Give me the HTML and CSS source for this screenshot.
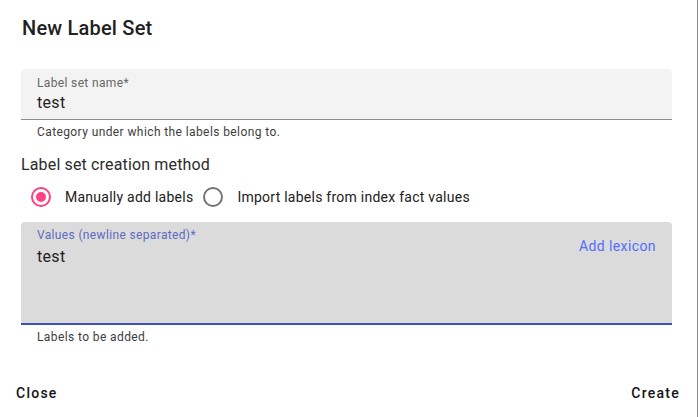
FILE: index.html
```html
<!DOCTYPE html>
<html lang="en">
<head>
<meta charset="utf-8">
<title>New Label Set</title>
<link rel="stylesheet" href="styles.css">
</head>
<body>
<div class="dialog">
  <h2 class="title">New Label Set</h2>
  <div class="content">
    <div class="field field-filled">
      <div class="field-main">
        <div class="field-label">Label set name*</div>
        <div class="field-value">test</div>
      </div>
    </div>
    <div class="hint">Category under which the labels belong to.</div>

    <div class="section-title">Label set creation method</div>
    <div class="radio-group">
      <label class="radio radio-checked">
        <span class="radio-touch"><span class="radio-ring"><span class="radio-dot"></span></span></span>
        <span class="radio-text">Manually add labels</span>
      </label>
      <label class="radio">
        <span class="radio-touch"><span class="radio-ring"></span></span>
        <span class="radio-text">Import labels from index fact values</span>
      </label>
    </div>

    <div class="field field-focused">
      <div class="field-main">
        <div class="field-label">Values (newline separated)*</div>
        <div class="field-value field-value-area">test</div>
      </div>
      <span class="field-suffix">Add lexicon</span>
    </div>
    <div class="hint">Labels to be added.</div>
  </div>
  <div class="actions">
    <button class="btn" type="button">Close</button>
    <button class="btn" type="button">Create</button>
  </div>
</div>
</body>
</html>
```

FILE: styles.css
```css
html, body {
  margin: 0;
  padding: 0;
  background: #ffffff;
}

body {
  font-family: Roboto, "Liberation Sans", Arial, sans-serif;
  color: #212121;
}

.dialog {
  width: 697px;
  height: 417px;
  border-right: 1px solid #8c8c8c;
  display: flex;
  flex-direction: column;
  background: #ffffff;
}

.title {
  margin: 0;
  padding: 12px 0 0 22px;
  font-size: 20px;
  line-height: 32px;
  font-weight: 500;
  letter-spacing: 0.2px;
  color: #212121;
}

.content {
  margin-top: 25px;
  padding: 0 25px 0 21px;
}

.field {
  display: flex;
  align-items: flex-start;
  box-sizing: border-box;
  border-radius: 4px 4px 0 0;
  padding: 0 16px;
}

.field-main {
  flex: 1;
  min-width: 0;
}

.field-filled {
  height: 51px;
  padding-top: 6px;
  background: #f3f3f3;
  border-bottom: 1px solid #8d8d8d;
}

.field-focused {
  height: 103px;
  padding-top: 5px;
  background: #dbdbdb;
  border-bottom: 2px solid #3f51b5;
}

.field-label {
  font-size: 12px;
  line-height: 16px;
  letter-spacing: 0.35px;
  color: #666666;
}

.field-focused .field-label {
  color: #5c6bc0;
}

.field-value {
  margin-top: 2px;
  font-size: 16px;
  line-height: 20px;
  letter-spacing: 0.3px;
  color: #1e1e1e;
}

.field-value-area {
  margin-top: 4px;
}

.field-suffix {
  margin-top: 9px;
  font-size: 14px;
  line-height: 20px;
  letter-spacing: 0.4px;
  color: #536dfe;
}

.hint {
  margin-top: 4px;
  padding-left: 16px;
  font-size: 12px;
  line-height: 16px;
  letter-spacing: 0.4px;
  color: #3d3d3d;
}

.section-title {
  margin-top: 13px;
  font-size: 16px;
  line-height: 24px;
  letter-spacing: 0.15px;
  color: #2b2b2b;
}

.radio-group {
  display: flex;
  align-items: center;
  height: 40px;
  margin-bottom: 5px;
}

.radio {
  display: inline-flex;
  align-items: center;
}

.radio-touch {
  width: 40px;
  height: 40px;
  display: flex;
  align-items: center;
  justify-content: center;
}

.radio-ring {
  width: 20px;
  height: 20px;
  box-sizing: border-box;
  border: 2px solid #737373;
  border-radius: 50%;
  display: flex;
  align-items: center;
  justify-content: center;
}

.radio-checked .radio-ring {
  border-color: #ff4081;
}

.radio-dot {
  width: 10px;
  height: 10px;
  border-radius: 50%;
  background: #ff4081;
}

.radio-text {
  padding-left: 4px;
  font-size: 14px;
  line-height: 20px;
  letter-spacing: 0.25px;
  color: #212121;
}

.actions {
  margin-top: auto;
  display: flex;
  justify-content: space-between;
  align-items: center;
  padding: 0 9px 6px 8px;
}

.btn {
  background: none;
  border: 0;
  margin: 0;
  padding: 0 8px;
  height: 36px;
  font-family: Roboto, "Liberation Sans", Arial, sans-serif;
  font-size: 14px;
  line-height: 36px;
  font-weight: 500;
  letter-spacing: 1.25px;
  color: #141414;
  cursor: pointer;
}
```
